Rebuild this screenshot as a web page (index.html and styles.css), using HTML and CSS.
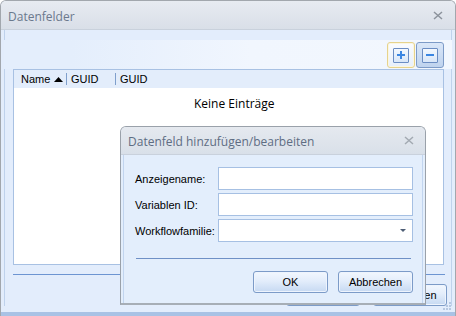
FILE: index.html
```html
<!DOCTYPE html>
<html>
<head>
<meta charset="utf-8">
<link rel="stylesheet" href="styles.css">
</head>
<body>
<div class="window">
  <div class="titlebar">
    <span class="title">Datenfelder</span>
    <svg class="close" width="10" height="9" viewBox="0 0 10 9"><path d="M1 1 L9 8 M9 1 L1 8" stroke="#8c939c" stroke-width="1.5" fill="none"/></svg>
  </div>
  <div class="client">
    <div class="toolbar">
      <div class="tbtn hover">
        <div class="ibox"><svg width="10" height="10" viewBox="0 0 10 10"><path d="M5 1 V9 M1 5 H9" stroke="#3b86e2" stroke-width="2"/></svg></div>
      </div>
      <div class="tbtn pressed">
        <div class="ibox"><svg width="10" height="10" viewBox="0 0 10 10"><path d="M1 5 H9" stroke="#3b86e2" stroke-width="2"/></svg></div>
      </div>
    </div>
    <div class="grid">
      <div class="grid-head">
        <div class="col c1">Name <svg class="sort" width="9" height="5" viewBox="0 0 9 5"><path d="M0 5 L4.5 0 L9 5 Z" fill="#000"/></svg></div>
        <div class="col c2">GUID</div>
        <div class="col c3">GUID</div>
      </div>
      <div class="grid-body">
        <div class="empty">Keine Einträge</div>
      </div>
    </div>
    <div class="sep"></div>
    <div class="footer">
      <div class="btn">OK</div>
      <div class="btn">Abbrechen</div>
    </div>
  </div>
  <div class="bottom-strip"></div>
  <svg class="grip" width="10" height="10" viewBox="0 0 10 10">
    <rect x="7" y="1" width="2" height="2" fill="#b6c8e2"/>
    <rect x="4" y="4" width="2" height="2" fill="#b6c8e2"/>
    <rect x="7" y="4" width="2" height="2" fill="#b6c8e2"/>
    <rect x="1" y="7" width="2" height="2" fill="#b6c8e2"/>
    <rect x="4" y="7" width="2" height="2" fill="#b6c8e2"/>
    <rect x="7" y="7" width="2" height="2" fill="#b6c8e2"/>
  </svg>

  <div class="dialog">
    <div class="dtitlebar">
      <span class="dtitle">Datenfeld hinzufügen/bearbeiten</span>
      <svg class="dclose" width="10" height="9" viewBox="0 0 10 9"><path d="M1 1 L9 8 M9 1 L1 8" stroke="#a3aab2" stroke-width="1.5" fill="none"/></svg>
    </div>
    <div class="dbody">
      <div class="row"><span class="lbl">Anzeigename:</span><div class="input"></div></div>
      <div class="row"><span class="lbl">Variablen ID:</span><div class="input"></div></div>
      <div class="row"><span class="lbl">Workflowfamilie:</span><div class="input combo"><span class="arrow"></span></div></div>
      <div class="dsep"></div>
      <div class="dfooter">
        <div class="btn">OK</div>
        <div class="btn">Abbrechen</div>
      </div>
    </div>
  </div>
</div>
</body>
</html>
```

FILE: styles.css
```css
* { box-sizing: border-box; }
html, body { margin: 0; padding: 0; }
body {
  width: 456px; height: 316px; overflow: hidden;
  background: #ffffff;
  font-family: "Liberation Sans", Arial, sans-serif;
  font-size: 11px;
  color: #000;
}
.window {
  position: relative;
  width: 456px; height: 316px;
  border: 1px solid #a2a7ad;
  border-bottom: none;
  border-radius: 6px 6px 0 0;
  display: flex; flex-direction: column;
  background: #e3edfc;
  overflow: hidden;
}
.titlebar {
  height: 29px;
  flex: none;
  background: linear-gradient(#e7ebf1, #d9dfe8);
  border-bottom: 1px solid #c9d1dc;
  display: flex; align-items: center; justify-content: space-between;
  padding: 0 12px 0 7px;
}
.title {
  font-family: "Open Sans", "Noto Sans", sans-serif;
  font-size: 12px;
  color: #6b798d;
  position: relative; top: 1px;
}
.close { margin-top: 1px; }
.client {
  flex: 1;
  display: flex; flex-direction: column;
  border-left: 2px solid #e3edfc;
  border-right: 2px solid #e3edfc;
  box-shadow: inset 1px 0 0 #bfd2ec, inset -1px 0 0 #bfd2ec;
  padding: 10px 8px 0 9px;
  margin: 0 1px;
}
.toolbar {
  height: 29px;
  margin: 0 -8px 0 -9px;
  padding: 2px 8px 1px 0;
  background: linear-gradient(to right, #e4eefc 15%, #f1f6fe 55%, #f2f7fe);
  display: flex; justify-content: flex-end; gap: 1px;
}
.tbtn {
  width: 28px; height: 26px;
  border-radius: 3px;
  display: flex; align-items: center; justify-content: center;
}
.tbtn.hover {
  border: 1px solid #e6d38d;
  background: linear-gradient(#fbfcfe, #e6effb);
  box-shadow: inset 0 0 0 1px #fbf6e1;
}
.tbtn.pressed {
  border: 1px solid #7d9bc7;
  background: linear-gradient(#dae7f8, #bfd3ee);
}
.ibox {
  width: 16px; height: 15px;
  border: 1px solid #6b8dc3;
  border-radius: 1px;
  background: linear-gradient(#f3f8fe, #d8e6f8);
  display: flex; align-items: center; justify-content: center;
}
.grid {
  height: 196px;
  flex: none;
  border: 1px solid #a8c1e3;
  background: #fff;
  display: flex; flex-direction: column;
}
.grid-head {
  height: 18px;
  background: #e3edfb;
  display: flex; align-items: center;
}
.col {
  height: 12px;
  display: flex; align-items: center;
  line-height: 12px;
}
.c1 { width: 53px; padding-left: 7px; border-right: 1px solid #7f9fcc; }
.c2 { width: 49px; padding-left: 4px; border-right: 1px solid #7f9fcc; }
.c3 { padding-left: 4px; }
.sort { margin-left: auto; margin-right: 3px; }
.grid-body { flex: 1; position: relative; }
.empty {
  padding-top: 7px;
  padding-left: 180px;
  font-family: "Open Sans", "Noto Sans", sans-serif;
  font-size: 12px;
}
.sep {
  height: 1px;
  margin-top: 9px;
  margin-right: -1px;
  background: #6d95d2;
}
.footer {
  margin-top: 9px;
  display: flex; justify-content: flex-end; gap: 13px;
  margin-right: -3px;
}
.btn {
  width: 75px; height: 22px;
  border: 1px solid #7c9bc8;
  border-radius: 3px;
  background: linear-gradient(#f2f7fe 0%, #e3edfb 45%, #c6d9f2 100%);
  box-shadow: inset 0 0 0 1px #eef4fd;
  display: flex; align-items: center; justify-content: center;
  font-family: "Liberation Sans", Arial, sans-serif;
  font-size: 11px;
}
.footer .btn { width: 74px; }
.bottom-strip {
  height: 4px; flex: none;
  margin-top: 6px;
  background: #a9c2e5;
}
.grip { position: absolute; right: 3px; bottom: 5px; }

/* dialog */
.dialog {
  position: absolute;
  left: 119px; top: 125px;
  width: 306px; height: 179px;
  border: 1px solid #9aa1aa;
  border-bottom: 2px solid #a7aeb6;
  border-radius: 6px 6px 0 0;
  background: #e3eefc;
  display: flex; flex-direction: column;
  overflow: hidden;
}
.dtitlebar {
  height: 28px; flex: none;
  background: linear-gradient(#e5e9ef, #d9e0e9);
  border-bottom: 1px solid #c9d1dc;
  display: flex; align-items: center; justify-content: space-between;
  padding: 0 11px 0 7px;
}
.dtitle {
  font-family: "Open Sans", "Noto Sans", sans-serif;
  font-size: 12px;
  color: #5e6d83;
  position: relative; top: 1px;
}
.dbody {
  flex: 1;
  border-left: 2px solid #e3eefc;
  border-right: 2px solid #e3eefc;
  box-shadow: inset 1px 0 0 #c2d5ef, inset -1px 0 0 #c2d5ef;
  padding: 12px 10px 0 12px;
  display: flex; flex-direction: column;
}
.row {
  display: flex; align-items: center;
  height: 23px;
  margin-bottom: 3px;
}
.lbl { width: 83px; }
.input {
  flex: 1;
  height: 23px;
  border: 1px solid #a6c0e3;
  background: #fff;
  position: relative;
}
.arrow {
  position: absolute;
  right: 6px; top: 9px;
  border-left: 3px solid transparent;
  border-right: 3px solid transparent;
  border-top: 3px solid #4d5d75;
}
.dsep {
  height: 1px;
  margin-top: 13px;
  margin-right: 2px;
  margin-left: 1px;
  background: #6f90c6;
}
.dfooter {
  margin-top: 12px;
  display: flex; justify-content: flex-end; gap: 10px;
}
```
